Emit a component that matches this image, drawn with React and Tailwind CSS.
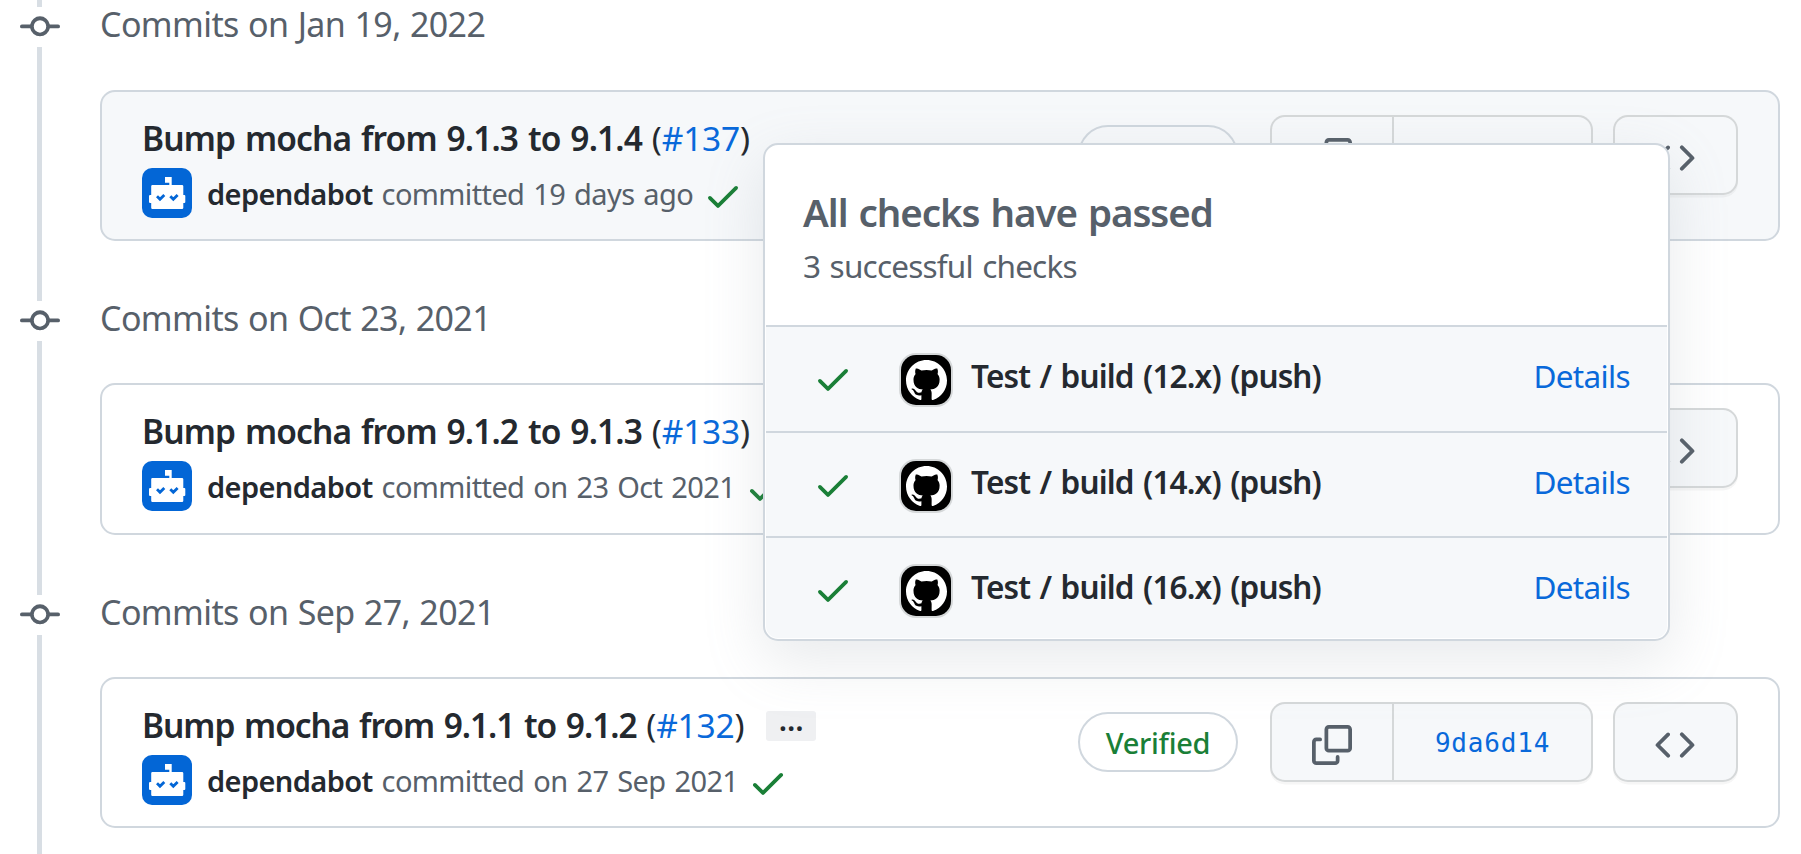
const SANS = "font-['Noto_Sans','Open_Sans',sans-serif]";

const Icon = ({ d, className }) => (
  <svg viewBox="0 0 16 16" className={`size-10 shrink-0 fill-current ${className ?? ""}`} fillRule="evenodd">
    <path d={d} />
  </svg>
);

const CHECK =
  "M13.78 4.22a.75.75 0 010 1.06l-7.25 7.25a.75.75 0 01-1.06 0L2.22 9.28a.75.75 0 011.06-1.06L6 10.94l6.72-6.72a.75.75 0 011.06 0z";
const COMMIT =
  "M10.5 7.75a2.5 2.5 0 11-5 0 2.5 2.5 0 015 0zm1.43.75a4.002 4.002 0 01-7.86 0H.75a.75.75 0 110-1.5h3.32a4.001 4.001 0 017.86 0h3.32a.75.75 0 110 1.5h-3.32z";
const COPY =
  "M0 6.75C0 5.784.784 5 1.75 5h1.5a.75.75 0 010 1.5h-1.5a.25.25 0 00-.25.25v7.5c0 .138.112.25.25.25h7.5a.25.25 0 00.25-.25v-1.5a.75.75 0 011.5 0v1.5A1.75 1.75 0 019.25 16h-7.5A1.75 1.75 0 010 14.25v-7.5zM5 1.75C5 .784 5.784 0 6.75 0h7.5C15.216 0 16 .784 16 1.75v7.5A1.75 1.75 0 0114.25 11h-7.5A1.75 1.75 0 015 9.25v-7.5zm1.75-.25a.25.25 0 00-.25.25v7.5c0 .138.112.25.25.25h7.5a.25.25 0 00.25-.25v-7.5a.25.25 0 00-.25-.25h-7.5z";
const CODE =
  "M4.72 3.22a.75.75 0 011.06 1.06L2.06 8l3.72 3.72a.75.75 0 11-1.06 1.06L.47 8.53a.75.75 0 010-1.06l4.25-4.25zm6.56 0a.75.75 0 10-1.06 1.06L13.94 8l-3.72 3.72a.75.75 0 101.06 1.06l4.25-4.25a.75.75 0 000-1.06l-4.25-4.25z";
const GITHUB =
  "M8 0C3.58 0 0 3.58 0 8c0 3.54 2.29 6.53 5.47 7.59.4.07.55-.17.55-.38 0-.19-.01-.82-.01-1.49-2.01.37-2.53-.49-2.69-.94-.09-.23-.48-.94-.82-1.13-.28-.15-.68-.52-.01-.53.63-.01 1.08.58 1.23.82.72 1.21 1.87.87 2.33.66.07-.52.28-.87.51-1.07-1.78-.2-3.64-.89-3.64-3.95 0-.87.31-1.59.82-2.15-.08-.2-.36-1.02.08-2.12 0 0 .67-.21 2.2.82.64-.18 1.32-.27 2-.27.68 0 1.36.09 2 .27 1.53-1.04 2.2-.82 2.2-.82.44 1.1.16 1.92.08 2.12.51.56.82 1.27.82 2.15 0 3.07-1.87 3.75-3.65 3.95.29.25.54.73.54 1.48 0 1.07-.01 1.93-.01 2.2 0 .21.15.46.55.38A8.013 8.013 0 0016 8c0-4.42-3.58-8-8-8z";

const DependabotAvatar = () => (
  <svg viewBox="0 0 50 50" className="size-[50px] shrink-0 rounded-[10px] bg-[#0366d6]">
    <path
      fill="#fff"
      d="M23 9h6.7v8h10.3q1.3 0 1.3 1.3V27h1q1 0 1 1v6q0 1-1 1h-1v4.7q0 1.3-1.3 1.3H10.500q-1.300 0-1.300-1.300V35h-1q-1.200 0-1.200-1v-6q0-1 1.200-1h1v-8.700q0-1.300 1.300-1.300h16.800v-2.300H23z"
    />
    <path fill="none" stroke="#0366d6" strokeWidth="2.8" d="M15 28.200l3 3 4.300-4.300M28.300 28.200l3 3 4.300-4.300" />
  </svg>
);

const GithubAvatar = () => (
  <span className="flex size-[50px] shrink-0 items-center justify-center rounded-[15px] bg-black shadow-[0_0_0_2px_rgba(27,31,36,0.15)]">
    <svg viewBox="0 0 16 16" className="size-[41px] fill-white">
      <path d={GITHUB} />
    </svg>
  </span>
);

const BUTTON =
  "h-20 rounded-[15px] border-2 border-[#1b1f24]/15 bg-[#f6f8fa] shadow-[0_2.5px_0_rgba(27,31,36,0.04)]";

const Actions = ({ badge, hash }) => (
  <div className="mt-[23px] ml-auto flex items-center self-start">
    <span className="flex h-15 w-40 items-center justify-center rounded-full border-2 border-[#d0d7de] pt-0.5 text-[29px] font-medium tracking-[-0.3px] text-[#1a7f37]">
      {badge}
    </span>
    <div className={`ml-8 flex w-[323px] ${BUTTON}`}>
      <button className="flex w-[122px] items-center justify-center border-r-2 border-[#1b1f24]/15 text-[#57606a]">
        <Icon d={COPY} className="mt-1.5" />
      </button>
      <span className="flex flex-1 items-center justify-center pt-0.5 font-['DejaVu_Sans_Mono',monospace] text-[26px] tracking-[0.8px] text-[#0969da]">
        {hash}
      </span>
    </div>
    <button className={`ml-5 flex w-[125px] items-center justify-center text-[#57606a] ${BUTTON}`}>
      <Icon d={CODE} className="mt-1.5 mr-px" />
    </button>
  </div>
);

const commits = [
  { date: "Jan 19, 2022", title: "Bump mocha from 9.1.3 to 9.1.4", pr: "#137", when: "19 days ago", active: true, tracking: "tracking-[-0.87px]", size: "h-[151px]", gap: "h-[43px]" },
  { date: "Oct 23, 2021", title: "Bump mocha from 9.1.2 to 9.1.3", pr: "#133", when: "on 23 Oct 2021", tracking: "tracking-[-0.87px]", size: "h-[152px]", gap: "h-[42px]" },
  { date: "Sep 27, 2021", title: "Bump mocha from 9.1.1 to 9.1.2", pr: "#132", when: "on 27 Sep 2021", badge: "Verified", hash: "9da6d14", more: true, tracking: "tracking-[-1.05px]", size: "h-[151px]", gap: "h-[42px]" },
];

const CommitGroup = ({ c }) => (
  <section className="flex">
    <div className="flex w-[100px] shrink-0 flex-col text-[#57606a]">
      <Icon d={COMMIT} className="ml-5" />
      <div className="ml-[37px] w-[5px] flex-1 bg-[#d8dee4]" />
    </div>
    <div className="w-[1680px] pb-[60px]">
      <h2 className="h-10 pt-px text-[34px] leading-8 tracking-[-0.6px] [word-spacing:1px] text-[#57606a]">Commits on {c.date}</h2>
      <div className={c.gap} />
      <article
        className={`flex rounded-[15px] border-2 border-[#d0d7de] px-10 ${c.size} ${c.active ? "bg-[#f6f8fa]" : "bg-white"}`}
      >
        <div className="pt-[25px]">
          <div className={`flex items-start text-[33.5px] leading-[42px] font-semibold whitespace-pre text-[#24292f] [word-spacing:2px] ${c.tracking}`}>
            <p>
              {c.title}{" "}
              <span className="font-normal tracking-[-0.2px]">
                (<a className="text-[#0969da]">{c.pr}</a>)
              </span>
            </p>
            {c.more && (
              <button className="mt-[7px] ml-[22px] flex h-[30px] w-[50px] items-start justify-center rounded-[3px] bg-[#eff0f2] text-[30px] leading-[17px] tracking-normal">
                …
              </button>
            )}
          </div>
          <div className="mt-[9px] flex h-[50px] items-center text-[29px] text-[#57606a]">
            <DependabotAvatar />
            <p className="mt-0.5 ml-[15px] tracking-[-0.62px] [word-spacing:2px]">
              <span className="font-semibold tracking-[-0.6px] text-[#24292f]">dependabot</span> committed {c.when}
            </p>
            <Icon d={CHECK} className="mt-1.5 ml-2.5 text-[#1a7f37]" />
          </div>
        </div>
        <Actions badge={c.badge} hash={c.hash} />
      </article>
    </div>
  </section>
);

const checks = [
  { name: "Test / build (12.x) (push)", size: "h-[106px]" },
  { name: "Test / build (14.x) (push)", size: "h-[105px]" },
  { name: "Test / build (16.x) (push)", size: "h-[102px] rounded-b-[12px]" },
];

const ChecksPopover = () => (
  <div className="absolute top-[143px] left-[763px] h-[498px] w-[907px] rounded-[15px] border-2 border-[#d0d7de] bg-white shadow-[0_20px_60px_rgba(140,149,159,0.2)]">
    <header className="h-[180px] pt-[41px] pl-[38px] text-[#57606a]">
      <h3 className="text-[38.5px] leading-[52px] font-semibold tracking-[-1.05px] [word-spacing:2px]">All checks have passed</h3>
      <p className="mt-1.5 text-[31.5px] leading-11 tracking-[-0.8px] [word-spacing:2px]">3 successful checks</p>
    </header>
    {checks.map((k) => (
      <div key={k.name} className={`mx-px flex items-start border-t-2 border-[#d0d7de] bg-[#f6f8fa] pr-[37px] pl-[47px] ${k.size}`}>
        <Icon d={CHECK} className="mt-8 text-[#1a7f37]" />
        <div className="mt-7 ml-12">
          <GithubAvatar />
        </div>
        <span className="mt-[27px] ml-5 text-[31.5px] leading-11 font-semibold tracking-[-0.84px] [word-spacing:2px] text-[#24292f]">
          {k.name}
        </span>
        <a className="mt-[27px] ml-auto text-[31.5px] leading-11 tracking-[-0.65px] text-[#0969da]">Details</a>
      </div>
    ))}
  </div>
);

export default function App() {
  return (
    <main className={`relative h-[854px] w-[1801px] overflow-hidden bg-white ${SANS}`}>
      <div className="ml-[37px] h-[7px] w-[5px] bg-[#d8dee4]" />
      {commits.map((c) => (
        <CommitGroup key={c.date} c={c} />
      ))}
      <ChecksPopover />
    </main>
  );
}
